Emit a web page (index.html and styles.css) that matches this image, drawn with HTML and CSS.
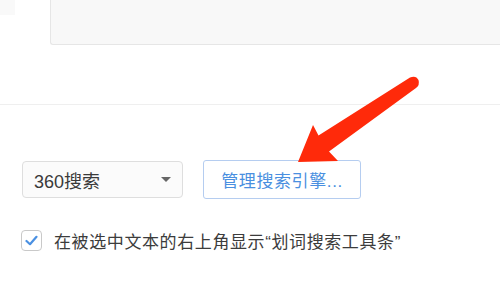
FILE: index.html
```html
<!DOCTYPE html>
<html>
<head>
    <title>搜索设置</title>
    <link rel="stylesheet" href="styles.css">
</head>
<body>
    <div id="top-area">
        <div class="corner"></div>
        <div class="preview-box"></div>
    </div>

    <div id="search-settings">
        <div class="engine-row">
            <div class="engine-select">
                <span>360搜索</span>
                <span class="caret"></span>
            </div>
            <button type="button" class="manage-btn">管理搜索引擎...</button>
        </div>

        <label class="check-row">
            <span class="check-box">
                <svg width="13" height="11" viewBox="0 0 13 11">
                    <path d="M1.5 6 L5 9.2 L11.5 1.8" fill="none" stroke="#4a90e2" stroke-width="2.2" stroke-linecap="round" stroke-linejoin="round"/>
                </svg>
            </span>
            <span class="check-text">在被选中文本的右上角显示“划词搜索工具条”</span>
        </label>
    </div>

    <!-- red annotation arrow drawn over the screenshot -->
    <svg class="annotation" width="500" height="295" viewBox="0 0 500 295">
        <path d="M298 162 L313 125 L318.5 135.5 L410 77.5 Q416 75 418.5 80 Q420 85 416 88 L329 151.5 L338 161 Z" fill="#ff2a0a"/>
    </svg>
</body>
</html>
```

FILE: styles.css
```css
body {
    margin: 0;
    background-color: #fff;
    font-family: "Liberation Sans", "Noto Sans CJK SC", sans-serif;
    color: #333;
    position: relative;
    height: 295px;
    overflow: hidden;
}

#top-area {
    display: flex;
    height: 104px;
    border-bottom: 1px solid #efefef;
}

.corner {
    width: 15px;
    height: 15px;
    background-color: #f9f9f9;
}

.preview-box {
    margin-left: 35px;
    flex: 1;
    height: 44px;
    background-color: #f8f8f8;
    border: 1px solid #e6e6e6;
    border-top: none;
    border-right: none;
    border-bottom-left-radius: 3px;
}

#search-settings {
    padding: 55px 0 0 21px;
}

.engine-row {
    display: flex;
    align-items: center;
    gap: 20px;
    margin-left: 1px;
}

.engine-select {
    box-sizing: border-box;
    width: 161px;
    height: 37px;
    border: 1px solid #dedede;
    border-radius: 4px;
    background-color: #fbfbfb;
    display: flex;
    align-items: center;
    justify-content: space-between;
    padding: 0 11px 0 11px;
    font-size: 18px;
    color: #3a3a3a;
}

.caret {
    width: 0;
    height: 0;
    border-left: 5px solid transparent;
    border-right: 5px solid transparent;
    border-top: 5px solid #666;
}

.manage-btn {
    box-sizing: border-box;
    width: 158px;
    height: 39px;
    border: 1px solid #b5cdf0;
    border-radius: 3px;
    background-color: #fff;
    color: #4a8fe0;
    font-family: inherit;
    font-size: 17px;
    letter-spacing: 0.6px;
    padding: 0;
}

.check-row {
    display: flex;
    align-items: center;
    margin-top: 29px;
}

.check-box {
    box-sizing: border-box;
    width: 21px;
    height: 21px;
    border: 1px solid #c9c9c9;
    border-radius: 4px;
    background-color: #fff;
    display: flex;
    align-items: center;
    justify-content: center;
}

.check-text {
    margin-left: 12px;
    font-size: 17px;
    letter-spacing: 0.6px;
    color: #3c3c3c;
}

.annotation {
    position: absolute;
    left: 0;
    top: 0;
}
```
